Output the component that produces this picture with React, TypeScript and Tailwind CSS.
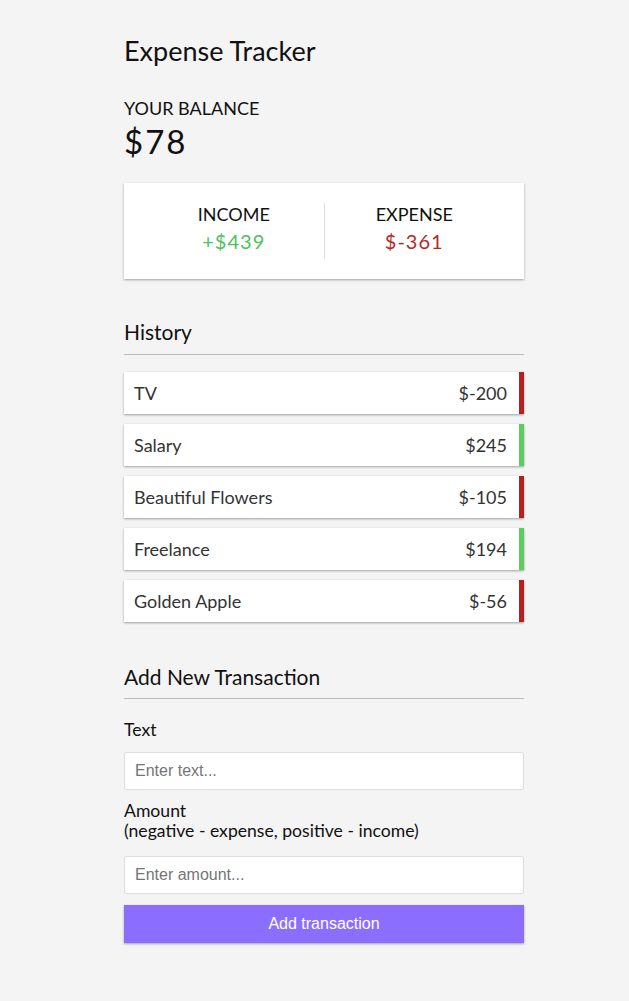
import React from "react";

const rows = [
  { name: "TV", amt: "$-200", plus: false },
  { name: "Salary", amt: "$245", plus: true },
  { name: "Beautiful Flowers", amt: "$-105", plus: false },
  { name: "Freelance", amt: "$194", plus: true },
  { name: "Golden Apple", amt: "$-56", plus: false },
];

export default function App() {
  return (
    <div className="min-h-screen bg-[#f4f4f4] font-['Lato','Noto_Sans',sans-serif] text-[#111]">
      <div className="w-[400px] ml-[124px] pt-[34px] pb-[58px]">
        <h1 className="text-[27px] leading-[34px] font-normal">Expense Tracker</h1>
        <h4 className="mt-[30px] text-[18px] leading-[20px] uppercase">Your Balance</h4>
        <div className="mt-[3px] text-[33px] leading-[40px] tracking-[2px]">$78</div>

        <div className="mt-[22px] h-[96px] p-[20px] flex bg-white shadow-[0_1px_3px_rgba(0,0,0,0.12),0_1px_2px_rgba(0,0,0,0.24)]">
          <div className="flex-1 text-center border-r border-[#dedede]">
            <div className="text-[18px] leading-[22px] uppercase">Income</div>
            <div className="mt-[4px] text-[20px] leading-[24px] tracking-[1px] text-[#4cc35c]">+$439</div>
          </div>
          <div className="flex-1 text-center">
            <div className="text-[18px] leading-[22px] uppercase">Expense</div>
            <div className="mt-[4px] text-[20px] leading-[24px] tracking-[1px] text-[#b52a24]">$-361</div>
          </div>
        </div>

        <h3 className="mt-[40px] text-[21px] leading-[25px] pb-[10px] border-b border-[#bbb]">History</h3>
        <ul className="mt-[17px] flex flex-col gap-[10px]">
          {rows.map((r) => (
            <li
              key={r.name}
              className={`h-[42px] flex items-center justify-between pl-[10px] pr-[12px] bg-white text-[#333] text-[18px] shadow-[0_1px_3px_rgba(0,0,0,0.12),0_1px_2px_rgba(0,0,0,0.24)] border-r-[5px] ${
                r.plus ? "border-[#5ccc5c]" : "border-[#b22222]"
              }`}
            >
              <span>{r.name}</span>
              <span>{r.amt}</span>
            </li>
          ))}
        </ul>

        <h3 className="mt-[42px] text-[21px] leading-[25px] pb-[9px] border-b border-[#bbb]">Add New Transaction</h3>
        <div className="mt-[21px] text-[17.6px] leading-[20px]">Text</div>
        <input
          type="text"
          placeholder="Enter text..."
          className="mt-[12px] block w-full h-[38px] px-[10px] bg-white border border-[#dedede] rounded-[2px] text-[16px] font-['Liberation_Sans',Arial,sans-serif] placeholder:text-[#757575] outline-none"
        />
        <div className="mt-[11px] text-[17.6px] leading-[20px]">
          Amount
          <br />
          (negative - expense, positive - income)
        </div>
        <input
          type="number"
          placeholder="Enter amount..."
          className="mt-[15px] block w-full h-[38px] px-[10px] bg-white border border-[#dedede] rounded-[2px] text-[16px] font-['Liberation_Sans',Arial,sans-serif] placeholder:text-[#757575] outline-none"
        />
        <button className="mt-[11px] block w-full h-[38px] bg-[#8c6eff] text-white text-[16px] font-['Liberation_Sans',Arial,sans-serif] shadow-[0_1px_3px_rgba(0,0,0,0.12),0_1px_2px_rgba(0,0,0,0.24)]">
          Add transaction
        </button>
      </div>
    </div>
  );
}
